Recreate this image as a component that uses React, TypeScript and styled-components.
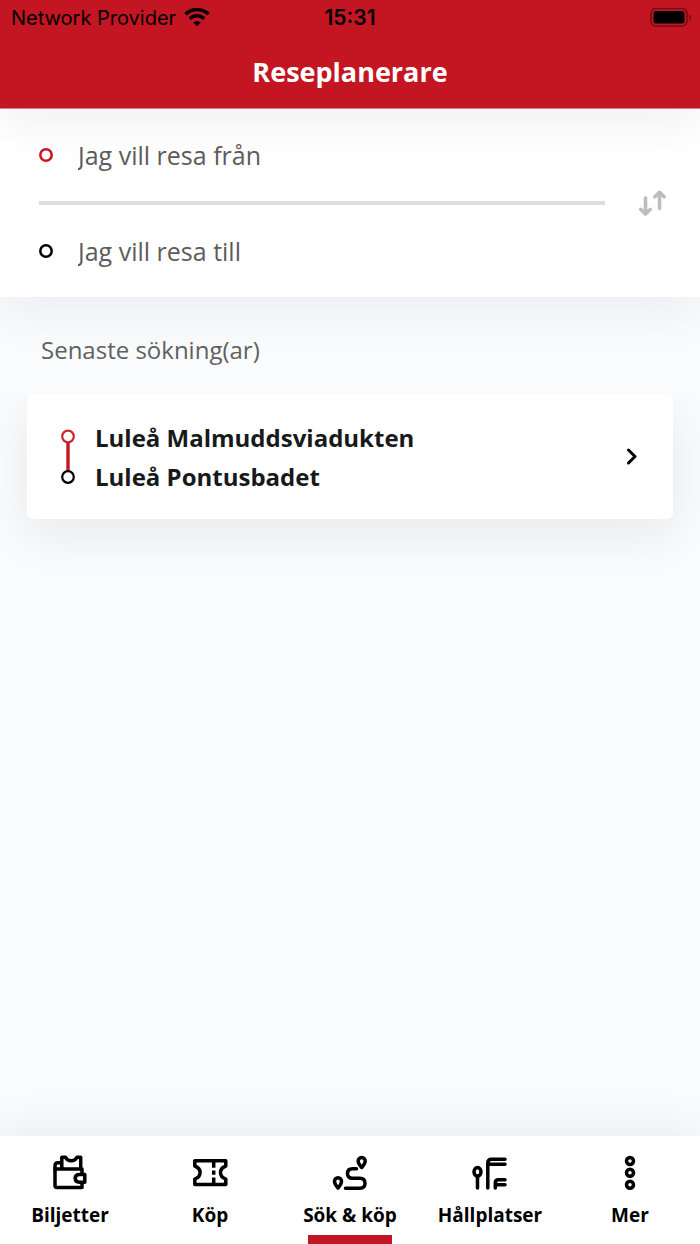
import React from "react";
import styled, { createGlobalStyle } from "styled-components";

const RED = "#c41622";

const GlobalStyle = createGlobalStyle`
  *, *::before, *::after { box-sizing: border-box; }
  body {
    margin: 0;
    background: #fafbfd;
    font-family: "Open Sans", "Noto Sans", sans-serif;
    color: #18191a;
  }
  button, input { font: inherit; color: inherit; }
`;

const Screen = styled.div`
  display: flex;
  flex-direction: column;
  min-height: 100vh;
  overflow: hidden;
`;

const Header = styled.header`
  position: relative;
  z-index: 2;
  background: ${RED};
  border-bottom: 1px solid #cb8387;
  box-shadow: 0 16px 48px rgba(0, 0, 0, 0.06);
`;

const StatusBar = styled.div`
  display: grid;
  grid-template-columns: 1fr auto 1fr;
  align-items: center;
  height: 36px;
  padding: 0 9px;
  font-family: Inter, "Liberation Sans", sans-serif;
  font-size: 20px;
  line-height: 24px;
  color: #000;
`;

const Carrier = styled.div`
  display: flex;
  align-items: center;
  gap: 8px;
  padding-left: 2px;
  white-space: nowrap;
`;

const Clock = styled.time`
  font-size: 21px;
  font-weight: 600;
`;

const Battery = styled.svg`
  justify-self: end;
`;

const Title = styled.h1`
  margin: 0;
  height: 72px;
  font-size: 27px;
  line-height: 71px;
  font-weight: 700;
  text-align: center;
  color: #fff;
`;

const SearchPanel = styled.form`
  position: relative;
  z-index: 1;
  display: flex;
  align-items: center;
  background: #fff;
  box-shadow: 0 16px 48px rgba(20, 24, 28, 0.06);
`;

const Fields = styled.div`
  flex: 1;
  padding-left: 39px;
`;

const Field = styled.label`
  display: flex;
  align-items: center;
  gap: 25px;
  height: 92px;
`;

const FieldInput = styled.input`
  flex: 1;
  min-width: 0;
  padding: 0;
  border: 0;
  outline: 0;
  background: transparent;
  font-size: 25px;
  line-height: 34px;
  &::placeholder { color: #5c5c5c; opacity: 1; }
`;

const Divider = styled.hr`
  margin: 0;
  height: 4px;
  border: 0;
  background: #dfdfdf;
`;

const SwapButton = styled.button`
  display: grid;
  place-items: center;
  width: 95px;
  height: 60px;
  padding: 0;
  border: 0;
  background: none;
`;

const Main = styled.main`
  flex: 1;
`;

const SectionTitle = styled.h2`
  position: relative;
  z-index: 1;
  margin: 0;
  padding: 36px 41px 27px;
  font-size: 24px;
  line-height: 34px;
  font-weight: 400;
  color: #5f6062;
`;

const RecentList = styled.ul`
  margin: 0;
  padding: 0 27px 120px;
  list-style: none;
  overflow: hidden;
`;

const RecentCard = styled.button`
  display: flex;
  align-items: center;
  gap: 20px;
  width: 100%;
  height: 125px;
  padding: 0 34px;
  border: 0;
  border-radius: 6px;
  background: #fff;
  text-align: left;
  box-shadow: 0 16px 48px rgba(20, 24, 28, 0.08);
`;

const Stops = styled.span`
  flex: 1;
  display: flex;
  flex-direction: column;
  font-size: 24px;
  line-height: 39px;
  font-weight: 700;
`;

const TabBar = styled.nav`
  position: relative;
  z-index: 1;
  display: grid;
  grid-template-columns: repeat(5, 1fr);
  height: 108px;
  background: #fff;
  box-shadow: 0 -4px 48px rgba(20, 24, 28, 0.08);
`;

const Tab = styled.a<{ $active?: boolean }>`
  display: flex;
  flex-direction: column;
  align-items: center;
  padding-top: 18px;
  font-size: 19px;
  line-height: 24px;
  font-weight: 700;
  color: #000;
  text-decoration: none;
  white-space: nowrap;
  &::after {
    content: "";
    width: 84px;
    height: 9px;
    margin-top: auto;
    background: ${(p) => (p.$active ? RED : "transparent")};
  }
`;

const TabIcon = styled.svg`
  width: 40px;
  height: 40px;
  margin-bottom: 9px;
  fill: none;
  stroke: #000;
  stroke-width: 3.5;
  stroke-linecap: round;
  stroke-linejoin: round;
`;

function Ring({ color }: { color: string }) {
  return (
    <svg width="14" height="14" viewBox="0 0 14 14" fill="none" aria-hidden="true">
      <circle cx="7" cy="7" r="5.700" stroke={color} strokeWidth="2.500" />
    </svg>
  );
}

const tabs: { label: string; active?: boolean; icon: React.ReactNode }[] = [
  {
    label: "Biljetter",
    icon: (
      <>
        <path d="M32 20V15H5V31.500Q5 33.500 7 33.500H32V29" />
        <path d="M5 16V12Q5 8.800 8 8.800H11.500M11.800 14V3.200H15.500Q17 6.800 21.200 6.800Q25.500 6.800 27 3.200H30.700V14" />
        <path d="M34.800 20.500H29.500Q25.200 20.500 25.200 24.300Q25.200 28.200 29.500 28.200H34.800Z" />
      </>
    ),
  },
  {
    label: "Köp",
    icon: (
      <>
        <path d="M4.800 6.800H35.800V12Q30.500 14 30.500 18.600Q30.500 23.300 35.800 25.200V30.400H4.800V25.200Q10.100 23.300 10.100 18.600Q10.100 14 4.800 12Z" />
        <path d="M23.700 7V13.700M23.700 16.500V20.800M23.700 23.600V30" strokeLinecap="butt" />
      </>
    ),
  },
  {
    label: "Sök & köp",
    active: true,
    icon: (
      <>
        <path d="M26.500 14.700H22.500Q17.500 14.700 17.500 19.400Q17.500 24.200 22.500 24.200H30Q35 24.200 35 29.300Q35 34.300 30 34.300H15.500" />
        <path d="M31.700 13.500Q28.200 9.500 28.200 7A3.500 3.500 0 0 1 35.200 7Q35.200 9.500 31.700 13.500ZM8 34Q4.500 30 4.500 27.300A3.500 3.500 0 0 1 11.500 27.300Q11.500 30 8 34Z" />
      </>
    ),
  },
  {
    label: "Hållplatser",
    icon: (
      <>
        <ellipse cx="7.500" cy="17.800" rx="3.500" ry="4.300" />
        <path d="M7.500 23V34M17.800 34V9Q17.800 5.200 21.500 5.200H35M18.500 10.300H35M25.300 34V29Q25.300 25.800 28.500 25.800H35M26 30.800H35" />
      </>
    ),
  },
  {
    label: "Mer",
    icon: (
      <>
        <circle cx="20" cy="7" r="3.500" />
        <circle cx="20" cy="18.800" r="3.500" />
        <circle cx="20" cy="30.700" r="3.500" />
      </>
    ),
  },
];

export default function App() {
  return (
    <Screen>
      <GlobalStyle />
      <Header>
        <StatusBar>
          <Carrier>
            Network Provider
            <svg width="26" height="20" viewBox="0 0 26 20" fill="none" stroke="#000" strokeWidth="3.400" aria-hidden="true">
              <path d="M1.500 6.200C8 -0.100 18 -0.100 24.500 6.200" />
              <path d="M5.800 10.700C10 6.800 16 6.800 20.200 10.700" />
              <path d="M13 18.200L9.200 14.600C11.500 12.400 14.500 12.400 16.800 14.600Z" fill="#000" stroke="none" />
            </svg>
          </Carrier>
          <Clock>15:31</Clock>
          <Battery width="41" height="20" viewBox="0 0 41 20" aria-hidden="true">
            <rect x="1" y="0.500" width="36" height="17.500" rx="5" fill="none" stroke="#730d14" strokeWidth="1.600" />
            <rect x="3.500" y="3" width="31" height="12.500" rx="2.500" fill="#000" />
            <path d="M39 6.500Q41 7 41 9.300Q41 11.500 39 12Z" fill="#730d14" />
          </Battery>
        </StatusBar>
        <Title>Reseplanerare</Title>
      </Header>

      <SearchPanel>
        <Fields>
          <Field>
            <Ring color="#cb1423" />
            <FieldInput type="text" aria-label="Från" placeholder="Jag vill resa från" />
          </Field>
          <Divider />
          <Field>
            <Ring color="#000" />
            <FieldInput type="text" aria-label="Till" placeholder="Jag vill resa till" />
          </Field>
        </Fields>
        <SwapButton type="button" aria-label="Byt riktning">
          <svg width="28" height="28" viewBox="0 0 28 28" fill="none" stroke="#bdbdbd" strokeWidth="3.600" strokeLinecap="round" strokeLinejoin="round">
            <path d="M6.500 9V24M1.800 20.500L6.500 25L11.200 20.500" />
            <path d="M20.500 19.500V4M15.800 7.800L20.500 3.300L25.200 7.800" />
          </svg>
        </SwapButton>
      </SearchPanel>

      <Main>
        <SectionTitle>Senaste sökning(ar)</SectionTitle>
        <RecentList>
          <li>
            <RecentCard type="button">
              <svg width="14" height="56" viewBox="0 0 14 56" fill="none" strokeWidth="2.200" aria-hidden="true">
                <path d="M7 13V42" stroke={RED} strokeWidth="3.400" />
                <circle cx="7" cy="7.500" r="5.800" stroke="#cb2633" />
                <circle cx="7" cy="48" r="5.800" stroke="#000" />
              </svg>
              <Stops>
                <span>Luleå Malmuddsviadukten</span>
                <span>Luleå Pontusbadet</span>
              </Stops>
              <svg width="14" height="18" viewBox="0 0 14 18" fill="none" stroke="#000" strokeWidth="3" strokeLinecap="round" strokeLinejoin="round" aria-hidden="true">
                <path d="M3.500 2L10 8.500L3.500 15" />
              </svg>
            </RecentCard>
          </li>
        </RecentList>
      </Main>

      <TabBar>
        {tabs.map((tab) => (
          <Tab key={tab.label} href="#" $active={tab.active} aria-current={tab.active ? "page" : undefined}>
            <TabIcon viewBox="0 0 40 40" aria-hidden="true">
              {tab.icon}
            </TabIcon>
            {tab.label}
          </Tab>
        ))}
      </TabBar>
    </Screen>
  );
}
